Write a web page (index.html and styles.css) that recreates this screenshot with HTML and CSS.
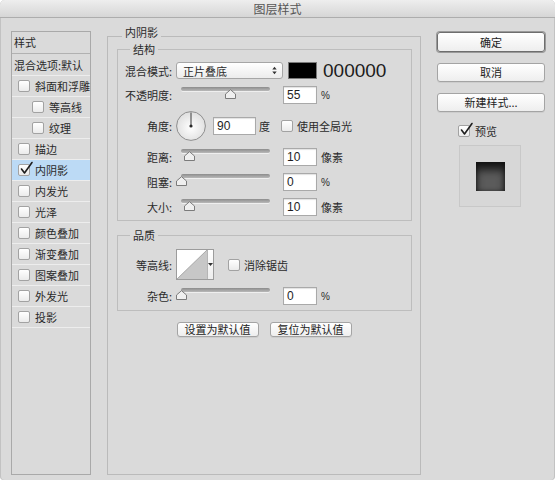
FILE: index.html
```html
<!DOCTYPE html>
<html lang="zh-CN">
<head>
<meta charset="utf-8">
<title>图层样式</title>
<link rel="stylesheet" href="styles.css">
</head>
<body>
<div class="window">
  <header class="titlebar">图层样式</header>
  <div class="main">
    <aside class="style-list">
      <div class="list-head">样式</div>
      <div class="list-row blend">混合选项:默认</div>
      <div class="list-row"><span class="cb"></span>斜面和浮雕</div>
      <div class="list-row indent"><span class="cb"></span>等高线</div>
      <div class="list-row indent"><span class="cb"></span>纹理</div>
      <div class="list-row"><span class="cb"></span>描边</div>
      <div class="list-row active"><span class="cb"><svg class="tick" width="14" height="14" viewBox="0 0 14 14"><path d="M2.5 7 L5.5 11 L13 0.5" fill="none" stroke="#1e1e1e" stroke-width="1.6" stroke-linecap="round" stroke-linejoin="round"/></svg></span>内阴影</div>
      <div class="list-row"><span class="cb"></span>内发光</div>
      <div class="list-row"><span class="cb"></span>光泽</div>
      <div class="list-row"><span class="cb"></span>颜色叠加</div>
      <div class="list-row"><span class="cb"></span>渐变叠加</div>
      <div class="list-row"><span class="cb"></span>图案叠加</div>
      <div class="list-row"><span class="cb"></span>外发光</div>
      <div class="list-row"><span class="cb"></span>投影</div>
    </aside>

    <fieldset class="settings">
      <legend>内阴影</legend>

      <fieldset class="group structure">
        <legend>结构</legend>
        <div class="row r-blend">
          <span class="lbl">混合模式:</span>
          <div class="select">
            <span>正片叠底</span>
            <svg class="updown" width="5" height="9" viewBox="0 0 5 9"><path d="M0.3 3.6 L2.5 0.8 L4.7 3.6 Z M0.3 5.4 L2.5 8.2 L4.7 5.4 Z" fill="#333"/></svg>
          </div>
          <span class="swatch"></span>
          <span class="hex">000000</span>
        </div>
        <div class="row">
          <span class="lbl">不透明度:</span>
          <div class="slider"><span class="track"></span><span class="thumb" style="left:55%"><svg width="11" height="10" viewBox="0 0 11 10"><path d="M0.5 9.5 V5 L5.5 0.7 L10.5 5 V9.5 Z" fill="#efefef" stroke="#7b7b7b" stroke-width="1" stroke-linejoin="round"/></svg></span></div>
          <input class="num" type="text" value="55">
          <span class="unit pct">%</span>
        </div>
        <div class="row r-angle">
          <span class="lbl">角度:</span>
          <svg class="dial" width="30" height="30" viewBox="0 0 30 30">
            <defs>
              <radialGradient id="dialfill" cx="50%" cy="55%" r="55%">
                <stop offset="0" stop-color="#ffffff"/>
                <stop offset="1" stop-color="#dedede"/>
              </radialGradient>
            </defs>
            <circle cx="15" cy="15" r="14.4" fill="url(#dialfill)" stroke="#8e8e8e" stroke-width="1"/>
            <line x1="15" y1="15" x2="15" y2="1.5" stroke="#3a3a3a" stroke-width="1"/>
            <circle cx="15" cy="15" r="1.6" fill="#2a2a2a"/>
          </svg>
          <input class="num wide" type="text" value="90">
          <span class="unit deg">度</span>
          <span class="cb global"></span>
          <span class="cb-text">使用全局光</span>
        </div>
        <div class="row">
          <span class="lbl">距离:</span>
          <div class="slider"><span class="track"></span><span class="thumb" style="left:9%"><svg width="11" height="10" viewBox="0 0 11 10"><path d="M0.5 9.5 V5 L5.5 0.7 L10.5 5 V9.5 Z" fill="#efefef" stroke="#7b7b7b" stroke-width="1" stroke-linejoin="round"/></svg></span></div>
          <input class="num" type="text" value="10">
          <span class="unit">像素</span>
        </div>
        <div class="row">
          <span class="lbl">阻塞:</span>
          <div class="slider"><span class="track"></span><span class="thumb" style="left:0%"><svg width="11" height="10" viewBox="0 0 11 10"><path d="M0.5 9.5 V5 L5.5 0.7 L10.5 5 V9.5 Z" fill="#efefef" stroke="#7b7b7b" stroke-width="1" stroke-linejoin="round"/></svg></span></div>
          <input class="num" type="text" value="0">
          <span class="unit pct">%</span>
        </div>
        <div class="row">
          <span class="lbl">大小:</span>
          <div class="slider"><span class="track"></span><span class="thumb" style="left:9%"><svg width="11" height="10" viewBox="0 0 11 10"><path d="M0.5 9.5 V5 L5.5 0.7 L10.5 5 V9.5 Z" fill="#efefef" stroke="#7b7b7b" stroke-width="1" stroke-linejoin="round"/></svg></span></div>
          <input class="num" type="text" value="10">
          <span class="unit">像素</span>
        </div>
      </fieldset>

      <fieldset class="group quality">
        <legend>品质</legend>
        <div class="row r-contour">
          <span class="lbl">等高线:</span>
          <div class="contour">
            <svg width="30" height="29" viewBox="0 0 30 29">
              <rect x="0" y="0" width="30" height="29" fill="#ffffff"/>
              <polygon points="0,29 30,0 30,29" fill="#c7c7c7"/>
              <line x1="0" y1="29" x2="30" y2="0" stroke="#9a9a9a" stroke-width="0.8"/>
            </svg>
            <span class="contour-drop"><svg width="5" height="3" viewBox="0 0 5 3"><path d="M0 0 H5 L2.5 3 Z" fill="#333"/></svg></span>
          </div>
          <span class="cb aa"></span>
          <span class="cb-text">消除锯齿</span>
        </div>
        <div class="row">
          <span class="lbl">杂色:</span>
          <div class="slider"><span class="track"></span><span class="thumb" style="left:0%"><svg width="11" height="10" viewBox="0 0 11 10"><path d="M0.5 9.5 V5 L5.5 0.7 L10.5 5 V9.5 Z" fill="#efefef" stroke="#7b7b7b" stroke-width="1" stroke-linejoin="round"/></svg></span></div>
          <input class="num" type="text" value="0">
          <span class="unit pct">%</span>
        </div>
      </fieldset>

      <div class="default-buttons">
        <button class="btn small" type="button">设置为默认值</button>
        <button class="btn small" type="button">复位为默认值</button>
      </div>
    </fieldset>

    <aside class="actions">
      <button class="btn big default" type="button">确定</button>
      <button class="btn big" type="button">取消</button>
      <button class="btn big" type="button">新建样式...</button>
      <div class="preview-toggle">
        <span class="cb"><svg class="tick" width="14" height="14" viewBox="0 0 14 14"><path d="M2.5 7 L5.5 11 L13 0.5" fill="none" stroke="#1e1e1e" stroke-width="1.6" stroke-linecap="round" stroke-linejoin="round"/></svg></span>
        <span>预览</span>
      </div>
      <div class="preview-box"><span class="preview-swatch"></span></div>
    </aside>
  </div>
</div>
</body>
</html>
```

FILE: styles.css
```css
* { box-sizing: border-box; }
html, body { margin: 0; padding: 0; }
body {
  background: #ffffff;
  font-family: "Noto Sans CJK SC", "Noto Sans", sans-serif;
  font-size: 11px;
  color: #2a2a2a;
}

.window {
  width: 555px;
  height: 480px;
  background: #dadada;
  border-radius: 5px 5px 4px 4px;
  overflow: hidden;
  display: flex;
  flex-direction: column;
  box-shadow: inset 1px 0 0 #c2c2c2, inset -1px 0 0 #c2c2c2;
}

.titlebar {
  flex: none;
  height: 18px;
  line-height: 17px;
  text-align: center;
  font-size: 12px;
  color: #555555;
  background: linear-gradient(#eeeeee, #d6d6d6);
  border-bottom: 1px solid #adadad;
}

.main {
  display: flex;
  align-items: flex-start;
  padding-top: 13px;
}

/* left list */
.style-list {
  margin-left: 11px;
  width: 80px;
  height: 444px;
  border: 1px solid #a9a9a9;
  flex: none;
}
.list-head {
  height: 22px;
  line-height: 20px;
  padding-left: 2px;
  border-bottom: 1px solid #b1b1b1;
}
.list-row {
  height: 21px;
  display: flex;
  align-items: center;
  padding-left: 6px;
  border-bottom: 1px solid #ededed;
  white-space: nowrap;
}
.list-row.blend {
  height: 22px;
  padding-left: 2px;
}
.list-row.indent { padding-left: 20px; }
.list-row.active { background: #bcdaf5; }

.cb {
  position: relative;
  flex: none;
  width: 12px;
  height: 12px;
  margin-right: 5px;
  border: 1px solid #a2a2a2;
  border-radius: 2px;
  background: linear-gradient(#ffffff, #ebebeb);
}
.cb .tick {
  position: absolute;
  left: 0;
  top: -3px;
  overflow: visible;
}

/* middle settings */
.settings {
  flex: none;
  margin: -5px 0 0 16px;
  width: 314px;
  height: 449px;
  padding: 0;
  border: 1px solid #bababa;
  min-width: 0;
}
.settings > legend {
  margin-left: 14px;
  padding: 0 3px 8px;
  line-height: 13px;
}
.group {
  margin: 0 8px 0 9px;
  padding: 0;
  border: 1px solid #bdbdbd;
  min-width: 0;
  display: flex;
  flex-direction: column;
  gap: 7px;
}
.group > legend {
  margin-left: 12px;
  padding: 0 3px;
  line-height: 13px;
}
.structure { margin-top: -4px; padding: 6px 0 4px; }
.quality { margin-top: 8px; padding: 7px 0 5px; }

.row {
  display: flex;
  align-items: center;
  height: 18px;
  white-space: nowrap;
}
.row.r-blend { height: 17px; }
.row.r-angle { height: 30px; }
.row.r-contour { height: 31px; }

.lbl {
  width: 54px;
  text-align: right;
  flex: none;
}

.select {
  margin-left: 4px;
  width: 107px;
  height: 17px;
  display: flex;
  align-items: center;
  justify-content: space-between;
  padding: 0 5px 0 6px;
  border: 1px solid #a6a6a6;
  border-radius: 3px;
  background: linear-gradient(#ffffff, #ececec);
}
.swatch {
  margin-left: 5px;
  width: 29px;
  height: 17px;
  background: #000000;
  border: 1px solid #7a7a7a;
}
.hex {
  margin-left: 6px;
  font-family: "Liberation Sans", Arial, sans-serif;
  font-size: 19px;
  line-height: 17px;
  color: #1c1c1c;
}

.slider {
  position: relative;
  align-self: flex-start;
  margin-left: 9px;
  width: 89px;
  height: 18px;
  flex: none;
}
.track {
  display: block;
  margin-top: 1px;
  height: 4px;
  border-radius: 2px;
  background: linear-gradient(#8c8c8c, #b9b9b9);
  box-shadow: 0 1px 0 #efefef;
}
.thumb {
  position: absolute;
  top: 3px;
  width: 11px;
  height: 10px;
  margin-left: -5px;
}
.thumb svg { display: block; }

.num {
  margin: 0 0 0 13px;
  width: 34px;
  height: 18px;
  padding: 0 0 0 3px;
  border: 1px solid #a9a9a9;
  box-shadow: inset 0 1px 1px rgba(0,0,0,0.12);
  background: #ffffff;
  font-family: "Liberation Sans", Arial, sans-serif;
  font-size: 12px;
  color: #1e1e1e;
  outline: none;
  flex: none;
}
.num.wide {
  margin-left: 7px;
  width: 43px;
}
.unit { margin-left: 4px; }
.unit.pct {
  font-family: "Liberation Sans", Arial, sans-serif;
  font-size: 10px;
}
.unit.deg { margin-left: 3px; }

.dial {
  margin-left: 4px;
  flex: none;
}
.cb.global { margin-left: 11px; margin-right: 0; }
.cb.aa { margin-left: 14px; margin-right: 0; }
.cb-text { margin-left: 4px; }

.contour {
  margin-left: 4px;
  width: 38px;
  height: 31px;
  display: flex;
  border: 1px solid #9c9c9c;
  background: #ffffff;
  flex: none;
}
.contour svg { display: block; }
.contour-drop {
  flex: 1;
  display: flex;
  align-items: center;
  justify-content: center;
  border-left: 1px solid #b5b5b5;
  background: linear-gradient(#ffffff, #eeeeee);
}

.default-buttons {
  margin-top: 11px;
  display: flex;
  justify-content: center;
  gap: 11px;
}

.btn {
  font-family: "Noto Sans CJK SC", sans-serif;
  font-size: 11px;
  color: #222222;
  padding: 0;
  border: 1px solid #a4a4a4;
  border-radius: 3px;
  background: linear-gradient(#ffffff, #eeeeee);
  box-shadow: 0 1px 0 rgba(0,0,0,0.06);
}
.btn.small {
  width: 82px;
  height: 15px;
  line-height: 13px;
}

/* right column */
.actions {
  flex: none;
  margin-left: 16px;
  width: 108px;
  padding-top: 1px;
  display: flex;
  flex-direction: column;
}
.btn.big {
  width: 108px;
  height: 19px;
  line-height: 17px;
  margin-top: 11px;
}
.btn.big.default {
  margin-top: 0;
  height: 20px;
  border: 1px solid #6e6e6e;
  box-shadow: 0 0 0 1px #9a9a9a;
}
.preview-toggle {
  margin: 12px 0 0 21px;
  height: 14px;
  display: flex;
  align-items: center;
}
.preview-box {
  margin: 7px 0 0 22px;
  width: 62px;
  height: 62px;
  border: 1px solid #c8c8c8;
  background: #d7d7d7;
  display: flex;
  align-items: center;
  justify-content: center;
}
.preview-swatch {
  width: 29px;
  height: 29px;
  background: #5b5b5b;
  box-shadow: inset 0 8px 9px rgba(0,0,0,0.75), inset 0 0 4px rgba(0,0,0,0.5);
}
```
